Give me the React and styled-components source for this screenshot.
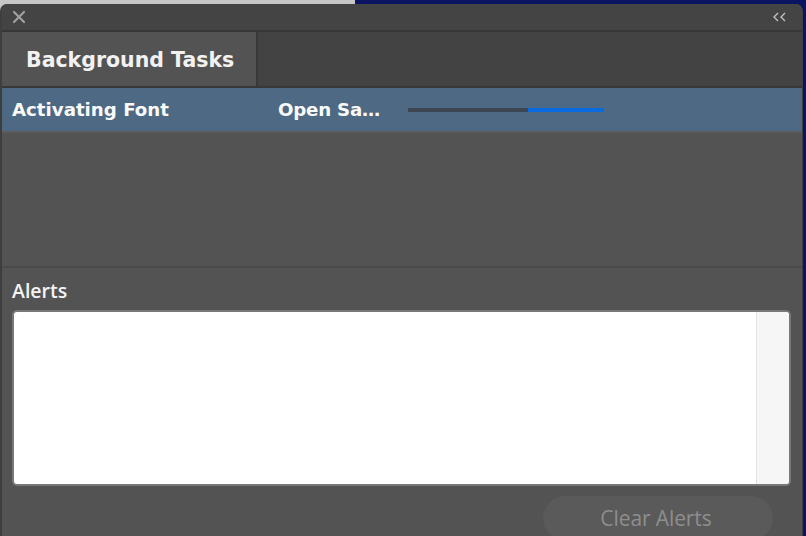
import React from "react";
import styled, { createGlobalStyle } from "styled-components";

const Global = createGlobalStyle`
  html, body { margin: 0; padding: 0; }
  body { font-family: "DejaVu Sans", "Liberation Sans", sans-serif; overflow: hidden; }
`;

const Desktop = styled.div`
  width: 806px;
  height: 536px;
  background: linear-gradient(to right, #c6c6c6 0 355px, #0b1461 355px 100%);
  overflow: hidden;
`;

const Panel = styled.div`
  margin-top: 4px;
  width: 803px;
  height: 532px;
  box-sizing: border-box;
  background: #535353;
  border-radius: 7px 7px 0 0;
  border-left: 2px solid #3e3e3e;
  border-right: 1px solid #3e3e3e;
  overflow: hidden;
  display: flex;
  flex-direction: column;
`;

const TitleBar = styled.div`
  height: 26px;
  background: #444444;
  border-bottom: 2px solid #373737;
  display: flex;
  align-items: center;
  justify-content: space-between;
  padding: 0 14px 0 10px;
  flex-shrink: 0;
`;

const IconBtn = styled.svg`
  display: block;
`;

const TabRow = styled.div`
  height: 56px;
  background: #434343;
  display: flex;
  border-bottom: 2px solid #383838;
  box-sizing: border-box;
  flex-shrink: 0;
`;

const Tab = styled.div`
  width: 256px;
  height: 100%;
  background: ${(p) => (p.$active ? "#535353" : "transparent")};
  border-right: 2px solid #393939;
  box-sizing: border-box;
  display: flex;
  align-items: center;
  padding-left: 24px;
  padding-top: 2px;
  color: #f2f2f2;
  font-weight: bold;
  font-size: 20.5px;
`;

const TaskRow = styled.div`
  height: 43px;
  background: #4e6983;
  display: flex;
  align-items: center;
  color: #fafafa;
  font-weight: bold;
  font-size: 18.2px;
  padding-left: 10px;
  border-bottom: 2px solid #5b5b5b;
  flex-shrink: 0;
`;

const TaskName = styled.div`
  width: 266px;
`;

const TaskFont = styled.div`
  width: 130px;
  letter-spacing: -0.2px;
`;

const Progress = styled.div`
  width: 196px;
  height: 4px;
  background: #3e4652;
  display: flex;
`;

const ProgressFill = styled.div`
  margin-left: auto;
  height: 100%;
  background: #0a6be0;
`;

const TaskArea = styled.div`
  height: 133px;
  border-bottom: 2px solid #4a4a4a;
  flex-shrink: 0;
`;

const AlertsSection = styled.div`
  flex: 1;
  display: flex;
  flex-direction: column;
  padding: 0 11px 0 10px;
`;

const AlertsLabel = styled.div`
  color: #f4f4f4;
  font-family: "Open Sans", "DejaVu Sans", sans-serif;
  font-weight: 600;
  font-size: 19.5px;
  height: 42px;
  display: flex;
  align-items: center;
  padding-top: 2px;
  box-sizing: border-box;
`;

const AlertsBox = styled.div`
  height: 176px;
  box-sizing: border-box;
  border: 2px solid #787878;
  border-radius: 5px;
  background: #ffffff;
  display: flex;
  justify-content: flex-end;
  overflow: hidden;
  flex-shrink: 0;
`;

const ScrollTrack = styled.div`
  width: 32px;
  background: #f6f6f6;
  border-left: 1px solid #e2e2e2;
`;

const ButtonRow = styled.div`
  display: flex;
  justify-content: flex-end;
  padding: 10px 18px 0 0;
`;

const ClearButton = styled.button`
  width: 230px;
  height: 44px;
  flex-shrink: 0;
  border: none;
  border-radius: 22px;
  background: #5a5a5a;
  color: #8e8e8e;
  font-family: "Open Sans", "DejaVu Sans", sans-serif;
  font-size: 21px;
  letter-spacing: -0.1px;
  padding: 0 4px 0 0;
  cursor: default;
`;

export default function App() {
  return (
    <>
      <Global />
      <Desktop>
        <Panel>
          <TitleBar>
            <IconBtn width="14" height="14" viewBox="0 0 14 14">
              <path d="M2 2 L12 12 M12 2 L2 12" stroke="#a0a0a0" strokeWidth="2.2" strokeLinecap="round" />
            </IconBtn>
            <IconBtn width="16" height="12" viewBox="0 0 16 12">
              <path d="M6 2 L2 6 L6 10 M13 2 L9 6 L13 10" stroke="#c0c0c0" strokeWidth="1.4" fill="none" />
            </IconBtn>
          </TitleBar>
          <TabRow>
            <Tab $active>Background Tasks</Tab>
          </TabRow>
          <TaskRow>
            <TaskName>Activating Font</TaskName>
            <TaskFont>Open Sa…</TaskFont>
            <Progress>
              <ProgressFill style={{ width: `${(76 / 196) * 100}%` }} />
            </Progress>
          </TaskRow>
          <TaskArea />
          <AlertsSection>
            <AlertsLabel>Alerts</AlertsLabel>
            <AlertsBox>
              <ScrollTrack />
            </AlertsBox>
            <ButtonRow>
              <ClearButton>Clear Alerts</ClearButton>
            </ButtonRow>
          </AlertsSection>
        </Panel>
      </Desktop>
    </>
  );
}
